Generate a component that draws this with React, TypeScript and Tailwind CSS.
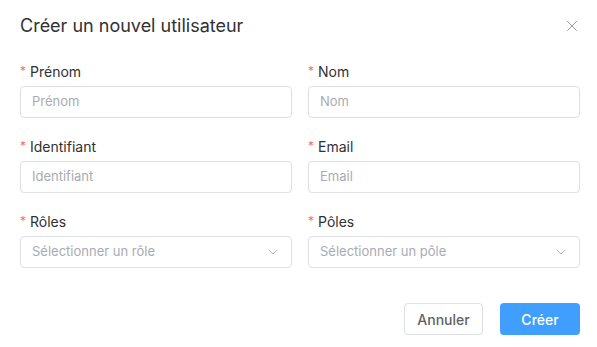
import { ChevronDown, X } from "lucide-react";

type Field = { label: string; placeholder: string; select?: boolean };

const fields: Field[] = [
  { label: "Prénom", placeholder: "Prénom" },
  { label: "Nom", placeholder: "Nom" },
  { label: "Identifiant", placeholder: "Identifiant" },
  { label: "Email", placeholder: "Email" },
  { label: "Rôles", placeholder: "Sélectionner un rôle", select: true },
  { label: "Pôles", placeholder: "Sélectionner un pôle", select: true },
];

function FormField({ field }: { field: Field }) {
  return (
    <div className="flex flex-col">
      <label className="flex h-[22px] items-center text-[14px] text-[#303133]">
        <span className="mr-[4px] text-[12px] text-[#f56c6c]">*</span>
        {field.label}
      </label>
      <div className="mt-[4px] flex h-[32px] items-center rounded-[4px] border border-[#dcdfe6] bg-white pl-[11px] pr-[10px]">
        {field.select ? (
          <>
            <span className="flex-1 text-[13px] text-[#a8abb2]">{field.placeholder}</span>
            <ChevronDown className="h-[16px] w-[16px] text-[#a8abb2]" strokeWidth={1.25} />
          </>
        ) : (
          <input
            readOnly
            placeholder={field.placeholder}
            className="w-full bg-transparent text-[13px] text-[#606266] outline-none placeholder:text-[#a8abb2]"
          />
        )}
      </div>
    </div>
  );
}

export default function App() {
  return (
    <div className="h-[347px] w-[597px] bg-white font-['Inter',sans-serif]">
      <div className="flex items-center justify-between pl-[20px] pr-[16px] pt-[14px]">
        <h2 className="text-[18px] leading-[24px] text-[#303133]">Créer un nouvel utilisateur</h2>
        <X className="h-[18px] w-[18px] text-[#909399]" strokeWidth={1.25} />
      </div>
      <div className="grid grid-cols-2 gap-x-[16px] gap-y-[17px] pl-[20px] pr-[17px] pt-[22px]">
        {fields.map((f) => (
          <FormField key={f.label} field={f} />
        ))}
      </div>
      <div className="flex justify-end gap-[17px] pr-[17px] pt-[35px]">
        <button className="h-[32px] w-[79px] rounded-[4px] border border-[#dcdfe6] bg-white text-[14px] font-medium text-[#606266]">
          Annuler
        </button>
        <button className="h-[32px] w-[80px] rounded-[4px] bg-[#409eff] text-[14px] font-medium text-white">
          Créer
        </button>
      </div>
    </div>
  );
}
